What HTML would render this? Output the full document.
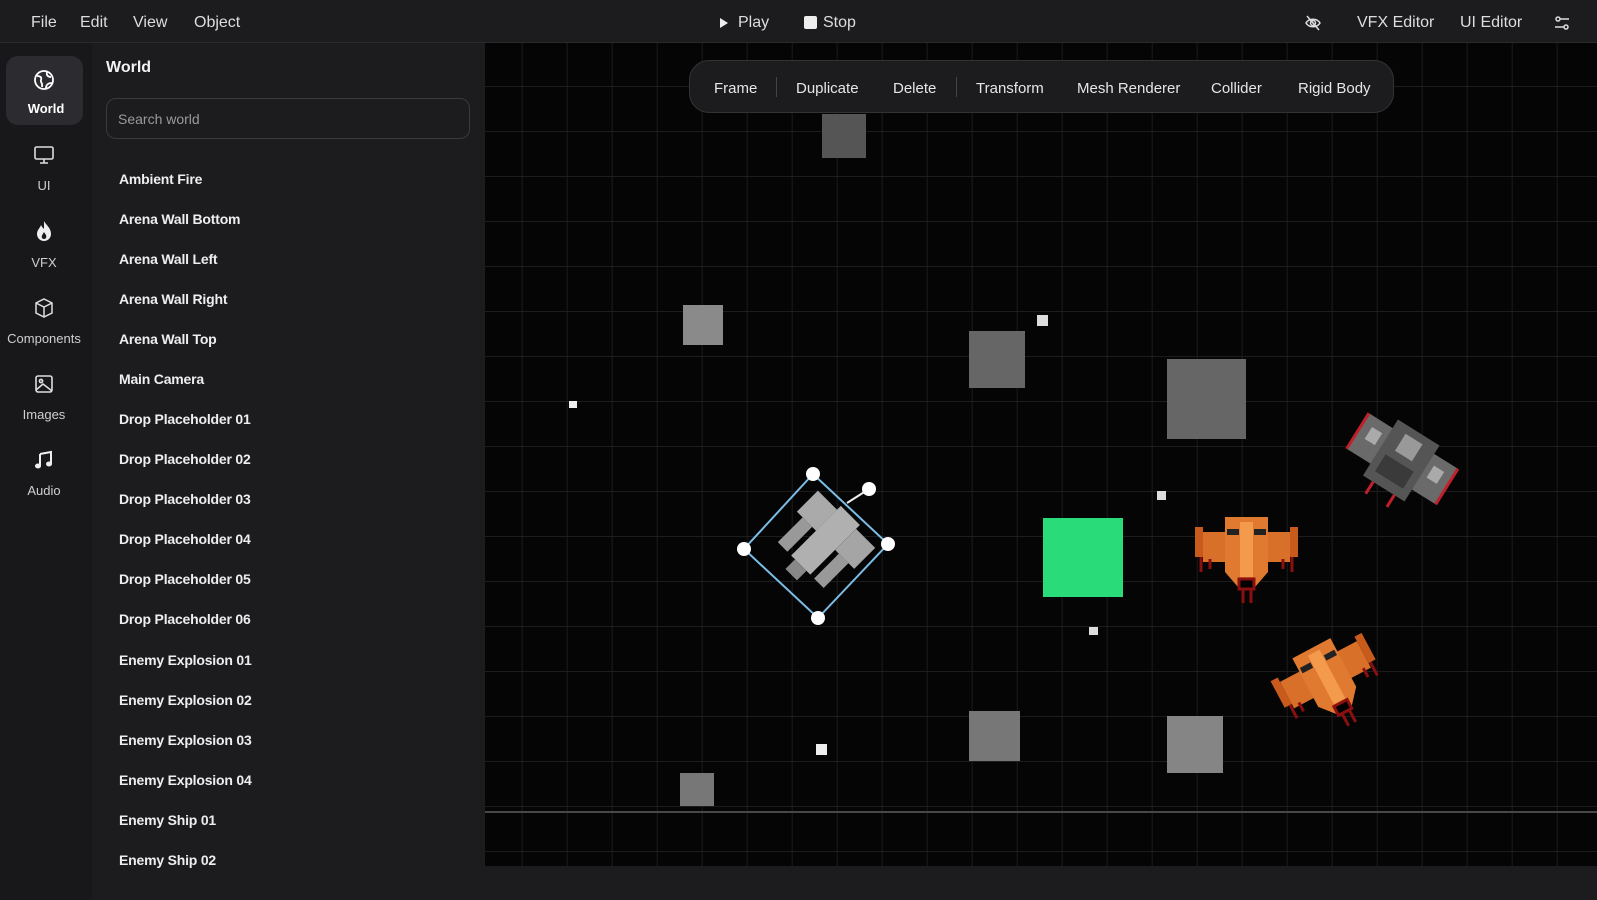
<!DOCTYPE html>
<html><head><meta charset="utf-8"><style>
*{margin:0;padding:0;box-sizing:border-box}
body{width:1597px;height:900px;background:#1c1c1f;font-family:"Liberation Sans",sans-serif;color:#e6e6e6;position:relative;overflow:hidden}
.a{position:absolute;white-space:nowrap}
#top{left:0;top:0;width:1597px;height:43px;background:#1c1c1e;border-bottom:1px solid #2a2a2c}
.m{font-size:16px;top:14px;color:#ddd}
#rail{left:0;top:43px;width:92px;height:857px;background:#18181a}
#panel{left:92px;top:43px;width:393px;height:857px;background:#1c1c1f}
.ri{left:0;width:88px;text-align:center;font-size:13px;color:#cfcfcf}
.li{left:119px;font-size:14px;font-weight:bold;color:#eee;letter-spacing:-0.2px}
#tb{left:689px;top:60px;width:705px;height:53px;background:#1c1c1f;border:1px solid #333;border-radius:20px}
.t{font-size:15px;top:80px;color:#e6e6e6}
.sep{top:77px;width:1px;height:20px;background:#444}
</style></head><body>
<div class="a" id="top"></div>
<div class="a m" style="left:31px">File</div>
<div class="a m" style="left:80px">Edit</div>
<div class="a m" style="left:133px">View</div>
<div class="a m" style="left:194px">Object</div>
<svg class="a" style="left:719px;top:17px" width="10" height="12"><path d="M1 1L9 6L1 11Z" fill="#eee"/></svg>
<div class="a m" style="left:738px">Play</div>
<div class="a" style="left:804px;top:16px;width:13px;height:13px;background:#eee;border-radius:2px"></div>
<div class="a m" style="left:823px">Stop</div>
<svg class="a" style="left:1304px;top:15px" width="18" height="16" fill="none" stroke="#ddd" stroke-width="1.5"><path d="M2 8C5 3 13 3 16 8C13 13 5 13 2 8Z"/><circle cx="9" cy="8" r="2.5"/><path d="M3 1L15 15"/></svg>
<div class="a m" style="left:1357px">VFX Editor</div>
<div class="a m" style="left:1460px">UI Editor</div>
<svg class="a" style="left:1553px;top:15px" width="18" height="16" fill="none" stroke="#ddd" stroke-width="1.5"><circle cx="5" cy="4" r="2"/><path d="M7 4H16M2 12H11"/><circle cx="13" cy="12" r="2"/></svg>

<div class="a" id="rail"></div>
<div class="a" style="left:6px;top:56px;width:77px;height:69px;background:#2c2c30;border-radius:12px"></div>
<svg class="a" style="left:33px;top:69px" width="22" height="22" fill="none" stroke="#fff" stroke-width="1.8"><circle cx="11" cy="11" r="9"/><path d="M4 7C7 7 9 8 8 11C7 13 10 14 9 18M14 3C13 6 15 8 18 8M13 19C13 16 15 14 19 14" /></svg>
<div class="a ri" style="top:101px;font-weight:bold;color:#fff;left:2px">World</div>
<svg class="a" style="left:33px;top:145px" width="22" height="20" fill="none" stroke="#ddd" stroke-width="1.6"><rect x="2" y="2" width="18" height="12" rx="1.5"/><path d="M11 14V18M7 18H15"/></svg>
<div class="a ri" style="top:178px">UI</div>
<svg class="a" style="left:34px;top:220px" width="20" height="22"><path d="M10 1C12 5 17 8 17 14A7 7 0 0 1 3 14C3 10 6 8 7 5C8 7 9 8 10 9Z" fill="#eee"/><path d="M10 12C11 14 13 15 12 18A2.5 2.5 0 0 1 8 18C7 16 9 14 10 12Z" fill="#18181a"/></svg>
<div class="a ri" style="top:255px">VFX</div>
<svg class="a" style="left:33px;top:297px" width="22" height="22" fill="none" stroke="#ddd" stroke-width="1.5"><path d="M11 2L19 6V16L11 20L3 16V6Z M3 6L11 10L19 6 M11 10V20"/></svg>
<div class="a ri" style="top:331px">Components</div>
<svg class="a" style="left:34px;top:374px" width="20" height="20" fill="none" stroke="#ddd" stroke-width="1.6"><rect x="2" y="2" width="16" height="16" rx="2"/><circle cx="7" cy="7" r="1.6"/><path d="M2 16L9 10L18 17"/></svg>
<div class="a ri" style="top:407px">Images</div>
<svg class="a" style="left:34px;top:450px" width="20" height="20"><path d="M6 4L17 2V14" stroke="#eee" stroke-width="2" fill="none"/><path d="M6 4V16" stroke="#eee" stroke-width="2"/><ellipse cx="4" cy="16" rx="3" ry="2.5" fill="#eee"/><ellipse cx="15" cy="14" rx="3" ry="2.5" fill="#eee"/></svg>
<div class="a ri" style="top:483px">Audio</div>

<div class="a" id="panel"></div>
<div class="a" style="left:106px;top:59px;font-size:16px;font-weight:bold;color:#f2f2f2">World</div>
<div class="a" style="left:106px;top:98px;width:364px;height:41px;border:1px solid #3a3a3e;border-radius:10px"></div>
<div class="a" style="left:118px;top:111px;font-size:14px;color:#9a9a9e">Search world</div>
<div class="a li" style="top:171px">Ambient Fire</div>
<div class="a li" style="top:211px">Arena Wall Bottom</div>
<div class="a li" style="top:251px">Arena Wall Left</div>
<div class="a li" style="top:291px">Arena Wall Right</div>
<div class="a li" style="top:331px">Arena Wall Top</div>
<div class="a li" style="top:371px">Main Camera</div>
<div class="a li" style="top:411px">Drop Placeholder 01</div>
<div class="a li" style="top:451px">Drop Placeholder 02</div>
<div class="a li" style="top:491px">Drop Placeholder 03</div>
<div class="a li" style="top:531px">Drop Placeholder 04</div>
<div class="a li" style="top:571px">Drop Placeholder 05</div>
<div class="a li" style="top:611px">Drop Placeholder 06</div>
<div class="a li" style="top:652px">Enemy Explosion 01</div>
<div class="a li" style="top:692px">Enemy Explosion 02</div>
<div class="a li" style="top:732px">Enemy Explosion 03</div>
<div class="a li" style="top:772px">Enemy Explosion 04</div>
<div class="a li" style="top:812px">Enemy Ship 01</div>
<div class="a li" style="top:852px">Enemy Ship 02</div>

<svg class="a" style="left:485px;top:43px" width="1112" height="857">
<defs>
<pattern id="g" x="-7.5" y="-1" width="45" height="45" patternUnits="userSpaceOnUse"><path d="M45 0V45M0 45H45" stroke="#232323" stroke-width="1.5" fill="none"/></pattern>
<g id="os">
<path d="M0 10H8V40H0Z M95 10H103V40H95Z" fill="#c85a1c"/>
<path d="M8 15H35V45H8Z M68 15H95V45H68Z" fill="#d9702a"/>
<path d="M30 0H73V55L60 70H43L30 55Z" fill="#e07a30"/>
<path d="M45 5H58V60H45Z" fill="#f49a4c"/>
<path d="M32 12H44V18H32Z M59 12H71V18H59Z" fill="#222"/>
<path d="M44 62H59V72H44Z M6 40V55M15 42V52M88 42V52M97 40V55M48 72V86M56 72V86" stroke="#8a1010" stroke-width="3"/>
</g>
</defs>
<rect width="1112" height="823" fill="#050505"/>
<rect width="1112" height="823" fill="url(#g)"/>
<rect x="0" y="768" width="1112" height="2" fill="#484848"/>
<rect x="0" y="823" width="1112" height="34" fill="#1c1c1f"/>
<rect x="337" y="71" width="44" height="44" fill="#555"/>
<rect x="198" y="262" width="40" height="40" fill="#8a8a8a"/>
<rect x="484" y="288" width="56" height="57" fill="#666"/>
<rect x="552" y="272" width="11" height="11" fill="#ddd"/>
<rect x="682" y="316" width="79" height="80" fill="#666"/>
<rect x="84" y="358" width="8" height="7" fill="#eee"/>
<rect x="672" y="448" width="9" height="9" fill="#ddd"/>
<rect x="558" y="475" width="80" height="79" fill="#2adb7a"/>
<rect x="604" y="584" width="9" height="8" fill="#ddd"/>
<rect x="484" y="668" width="51" height="50" fill="#777"/>
<rect x="682" y="673" width="56" height="57" fill="#858585"/>
<rect x="331" y="701" width="11" height="11" fill="#eee"/>
<rect x="195" y="730" width="34" height="33" fill="#777"/>
<!-- selected ship -->
<g transform="translate(331 503) rotate(45) scale(1.35)">
<rect x="-28" y="-30" width="20" height="22" fill="#aaa"/>
<rect x="-8" y="-34" width="20" height="52" fill="#b0b0b0"/>
<rect x="12" y="-30" width="20" height="22" fill="#a5a5a5"/>
<rect x="-22" y="-8" width="10" height="26" fill="#999"/>
<rect x="16" y="-8" width="10" height="26" fill="#999"/>
<rect x="-4" y="18" width="12" height="10" fill="#888"/>
</g>
<path d="M328 431L403 501L333 575L259 506Z" fill="none" stroke="#7cbde6" stroke-width="2"/>
<path d="M362 460L384 446" stroke="#eee" stroke-width="2"/>
<g fill="#fff"><circle cx="328" cy="431" r="7"/><circle cx="403" cy="501" r="7"/><circle cx="333" cy="575" r="7"/><circle cx="259" cy="506" r="7"/><circle cx="384" cy="446" r="7"/></g>
<!-- gray enemy -->
<g transform="translate(861 382) rotate(32 53 40)">
<rect x="0" y="12" width="30" height="42" fill="#6a6a6a"/>
<rect x="75" y="12" width="30" height="42" fill="#6a6a6a"/>
<rect x="28" y="2" width="49" height="66" fill="#555"/>
<rect x="42" y="10" width="20" height="20" fill="#999"/>
<path d="M0 12V54M105 12V54M40 68V82M65 68V82" stroke="#c0202a" stroke-width="3"/>
<rect x="10" y="22" width="12" height="14" fill="#aaa"/><rect x="83" y="22" width="12" height="14" fill="#aaa"/>
<rect x="36" y="38" width="33" height="20" fill="#3a3a3a"/>
</g>
<use href="#os" transform="translate(710 474)"/>
<use href="#os" transform="translate(795 600) rotate(-28 52 43)"/>
</svg>

<div class="a" id="tb"></div>
<div class="a t" style="left:714px">Frame</div>
<div class="a sep" style="left:776px"></div>
<div class="a t" style="left:796px">Duplicate</div>
<div class="a t" style="left:893px">Delete</div>
<div class="a sep" style="left:956px"></div>
<div class="a t" style="left:976px">Transform</div>
<div class="a t" style="left:1077px">Mesh Renderer</div>
<div class="a t" style="left:1211px">Collider</div>
<div class="a t" style="left:1298px">Rigid Body</div>
</body></html>
